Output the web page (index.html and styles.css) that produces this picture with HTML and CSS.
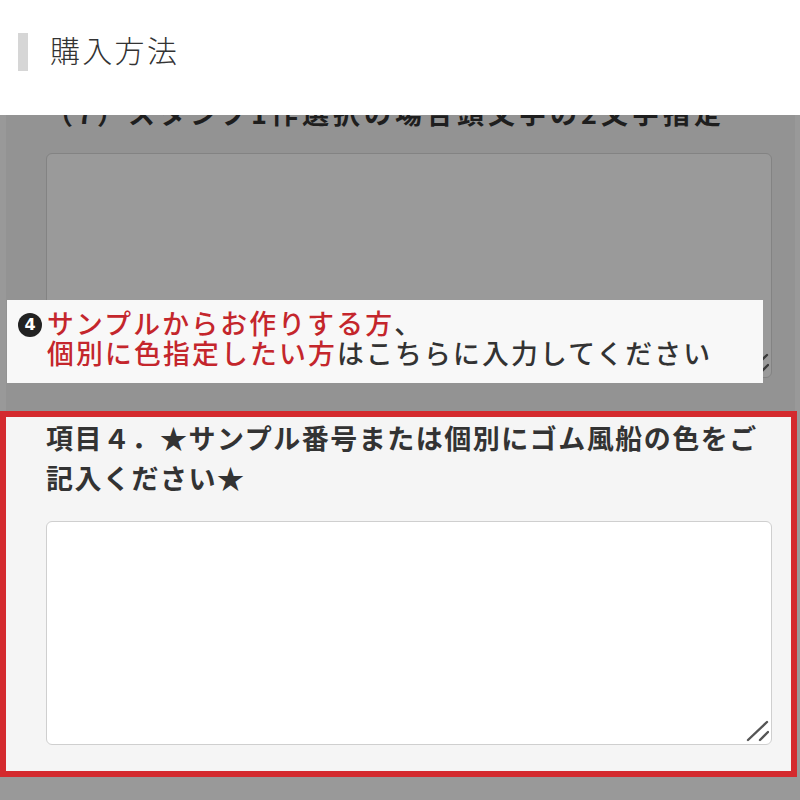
FILE: index.html
```html
<!DOCTYPE html>
<html lang="ja">
<head>
<meta charset="utf-8">
<title>購入方法</title>
<link rel="stylesheet" href="styles.css">
</head>
<body>
<header class="header">
  <span class="header-bar"></span>
  <h1 class="header-title">購入方法</h1>
</header>
<main class="page">
  <section class="item item-dim">
    <p class="label label-dim">（7）スタンプ1作選択の場合頭文字の2文字指定</p>
    <div class="field-wrap field-wrap-dim">
      <textarea class="field field-dim"></textarea>
      <svg class="grip grip-dim" viewBox="0 0 24 24" width="24" height="24" aria-hidden="true">
        <path d="M3 22 L22 4 M15 22 L23 14" stroke="#3a3a3a" stroke-width="2.4" stroke-linecap="round" fill="none"/>
      </svg>
    </div>
  </section>
  <section class="item item-focus">
    <p class="label">項目４．★サンプル番号または個別にゴム風船の色をご<br>記入ください★</p>
    <div class="field-wrap">
      <textarea class="field"></textarea>
      <svg class="grip" viewBox="0 0 24 24" width="24" height="24" aria-hidden="true">
        <path d="M3 22 L22 4 M15 22 L23 14" stroke="#555" stroke-width="2.4" stroke-linecap="round" fill="none"/>
      </svg>
    </div>
  </section>
  <div class="callout">
    <span class="badge">4</span>
    <div class="callout-text">
      <div class="callout-line"><span class="red">サンプルからお作りする方</span>、</div>
      <div class="callout-line"><span class="red">個別に色指定したい方</span>はこちらに入力してください</div>
    </div>
  </div>
</main>
</body>
</html>
```

FILE: styles.css
```css
html, body {
  margin: 0;
  padding: 0;
}
body {
  background: #999999;
  font-family: "Noto Sans CJK JP", "Noto Sans", sans-serif;
  color: #333;
}
.header {
  position: absolute;
  top: 0;
  left: 0;
  right: 0;
  height: 115px;
  background: #ffffff;
  z-index: 5;
  display: flex;
  align-items: flex-start;
  padding: 33px 0 0 18px;
  box-sizing: border-box;
}
.header-bar {
  width: 10px;
  height: 38px;
  background: #d6d6d6;
  flex: none;
}
.header-title {
  margin: -3px 0 0 22px;
  font-size: 30px;
  line-height: 38px;
  font-weight: 300;
  letter-spacing: 2.3px;
  color: #333;
}
.page {
  position: relative;
  min-height: 800px;
}
.item-dim {
  margin: 0 5px 0 6px;
  background: #939393;
  padding: 93px 23px 33px 40px;
}
.item-focus {
  margin: 0 3px 0 0;
  border: 6px solid #d42a2e;
  background: #f5f5f5;
  padding: 1px 19px 26px 40px;
  position: relative;
  z-index: 3;
}
.label {
  margin: 0;
  font-size: 27px;
  line-height: 40px;
  font-weight: 700;
  letter-spacing: 1.5px;
  color: #333;
  white-space: nowrap;
}
.label-dim {
  color: #1e1e1e;
  letter-spacing: 4px;
}
.field-wrap {
  position: relative;
  margin-top: 23px;
}
.field-wrap-dim {
  margin-top: 20px;
}
.field {
  display: block;
  width: 100%;
  box-sizing: border-box;
  height: 224px;
  border: 1px solid #cfcfcf;
  border-radius: 6px;
  background: #ffffff;
  font: inherit;
  resize: none;
}
.field-dim {
  height: 225px;
  background: #9a9a9a;
  border-color: #838383;
}
.grip {
  position: absolute;
  right: 3px;
  bottom: 3px;
  display: block;
}
.callout {
  position: absolute;
  top: 300px;
  left: 7px;
  width: 756px;
  height: 83px;
  box-sizing: border-box;
  background: #f8f8f8;
  z-index: 4;
  display: flex;
  align-items: flex-start;
  gap: 5px;
  padding: 10px 0 0 11px;
}
.badge {
  flex: none;
  width: 24px;
  height: 24px;
  margin-top: 3px;
  border-radius: 50%;
  background: #222;
  color: #fff;
  font-family: "DejaVu Sans", sans-serif;
  font-weight: 700;
  font-size: 16px;
  line-height: 24px;
  text-align: center;
}
.callout-text {
  font-family: "Liberation Sans", "Noto Sans CJK JP", sans-serif;
  font-size: 26.8px;
  font-weight: 500;
  letter-spacing: 2.2px;
  color: #333;
  white-space: nowrap;
}
.callout-line {
  height: 30px;
  line-height: 30px;
}
.red {
  color: #c4262c;
}
```
